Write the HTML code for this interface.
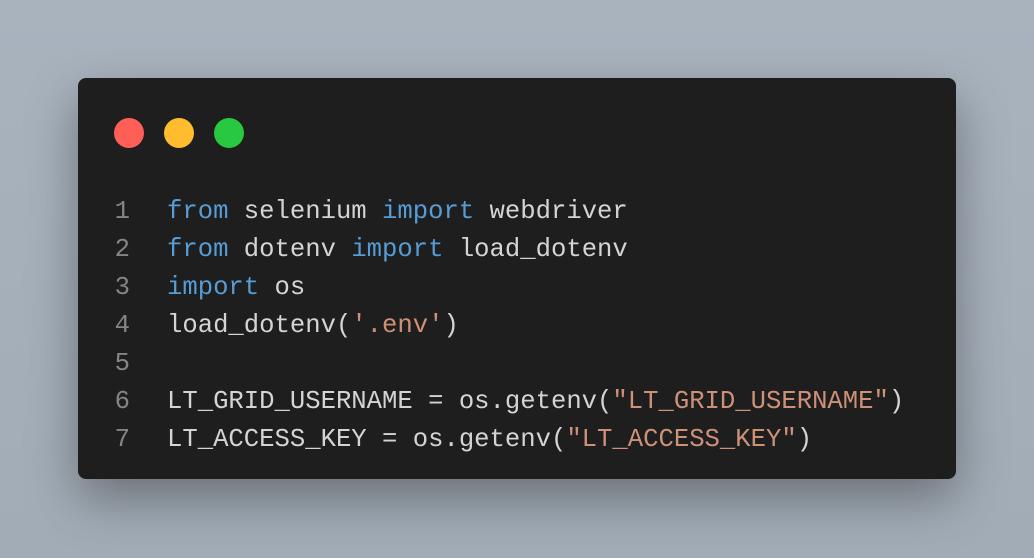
<!DOCTYPE html>
<html><head><style>
html,body{margin:0;padding:0;}
body{width:1034px;height:558px;background:linear-gradient(180deg,#a9b3be,#a2acb6);position:relative;overflow:hidden;font-family:"Liberation Mono",monospace;}
.card{position:absolute;left:78px;top:78px;width:878px;height:401px;background:#1e1e1e;border-radius:8px;box-shadow:0 20px 50px rgba(0,0,0,0.35);}
.dot{position:absolute;top:40px;width:30px;height:30px;border-radius:50%;}
.code{position:absolute;left:0;top:115px;font-size:25.6px;line-height:38px;color:#d4d4d4;white-space:pre;}
.ln{display:inline-block;width:52px;text-align:right;color:#858585;margin-right:37px;}
.k{color:#569cd6}.s{color:#ce9178}
</style></head><body>
<div class="card">
<div class="dot" style="left:36px;background:#ff5f57"></div>
<div class="dot" style="left:86px;background:#febc2e"></div>
<div class="dot" style="left:136px;background:#28c840"></div>
<div class="code"><div><span class="ln">1</span><span class="k">from</span> selenium <span class="k">import</span> webdriver</div><div><span class="ln">2</span><span class="k">from</span> dotenv <span class="k">import</span> load_dotenv</div><div><span class="ln">3</span><span class="k">import</span> os</div><div><span class="ln">4</span>load_dotenv(<span class="s">'.env'</span>)</div><div><span class="ln">5</span></div><div><span class="ln">6</span>LT_GRID_USERNAME = os.getenv(<span class="s">"LT_GRID_USERNAME"</span>)</div><div><span class="ln">7</span>LT_ACCESS_KEY = os.getenv(<span class="s">"LT_ACCESS_KEY"</span>)</div></div>
</div>
</body></html>
